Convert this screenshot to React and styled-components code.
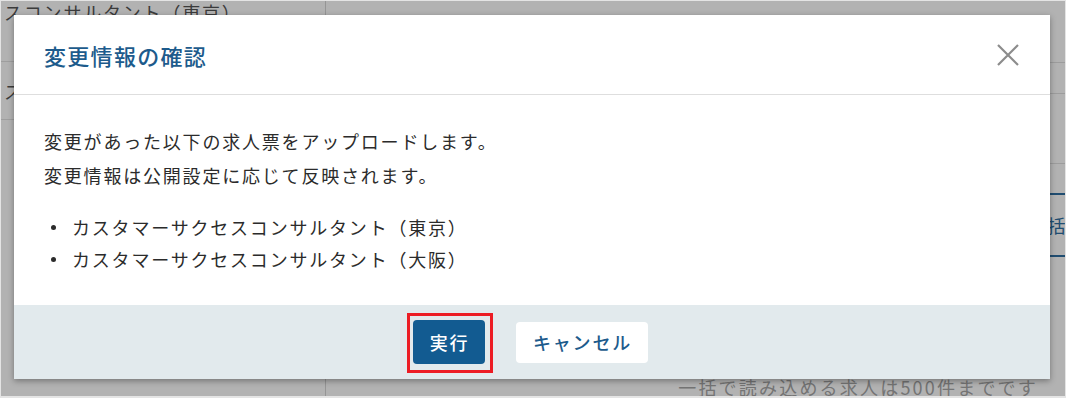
import React from "react";
import styled, { createGlobalStyle } from "styled-components";

const GlobalStyle = createGlobalStyle`
  html, body {
    margin: 0;
    padding: 0;
    background: #e4e4e4;
  }
  body {
    font-family: "Noto Sans CJK JP", "Noto Sans", sans-serif;
    color: #333;
  }
`;

const Frame = styled.div`
  width: 1066px;
  height: 398px;
  box-sizing: border-box;
  padding: 1px 1px 2px 1px;
  background: #e4e4e4;
`;

const Screen = styled.div`
  position: relative;
  width: 100%;
  height: 100%;
  overflow: hidden;
  background: #fff;
  display: flex;
`;

/* page behind the dialog */
const LeftPanel = styled.div`
  width: 324px;
  flex-shrink: 0;
  border-right: 1px solid #d6d6d6;
  display: flex;
  flex-direction: column;
`;

const JobRow = styled.div`
  height: ${(p) => p.$height}px;
  box-sizing: border-box;
  border-bottom: 1px solid #e2e2e2;
  padding-left: 3px;
  display: flex;
  align-items: ${(p) => (p.$top ? "flex-start" : "center")};
  font-size: 18px;
  letter-spacing: 1.8px;
  line-height: 22px;
  color: #555;
  white-space: nowrap;
`;

const RightPanel = styled.div`
  flex: 1;
  display: flex;
  flex-direction: column;
`;

const PanelBlock = styled.div`
  height: ${(p) => p.$height}px;
  box-sizing: border-box;
  border-bottom: 1px solid #e0e0e0;
`;

const BulkRow = styled.div`
  display: flex;
  justify-content: flex-end;
  margin-top: 29px;
  margin-right: -42px;
`;

const BulkButton = styled.div`
  height: 64px;
  box-sizing: border-box;
  border-top: 2px solid #2f6fa2;
  border-bottom: 2px solid #2f6fa2;
  padding: 0 0 0 20px;
  display: flex;
  align-items: center;
  font-size: 18px;
  letter-spacing: 1.8px;
  color: #2f6fa2;
  white-space: nowrap;
`;

const LimitNote = styled.div`
  margin-top: auto;
  margin-bottom: -3px;
  padding-right: 27px;
  text-align: right;
  font-size: 18px;
  letter-spacing: 2.2px;
  line-height: 24px;
  color: #a6a6a6;
  white-space: nowrap;
`;

/* dialog */
const Overlay = styled.div`
  position: absolute;
  inset: 0;
  background: rgba(0, 0, 0, 0.3);
  box-sizing: border-box;
  padding: 14px 15px 17px 13px;
  display: flex;
`;

const Modal = styled.div`
  flex: 1;
  background: #fff;
  display: flex;
  flex-direction: column;
  box-shadow: 0 2px 6px rgba(0, 0, 0, 0.35);
`;

const ModalHeader = styled.div`
  height: 80px;
  flex-shrink: 0;
  box-sizing: border-box;
  border-bottom: 1px solid #dedede;
  padding: 0 30px 0 30px;
  display: flex;
  align-items: center;
  justify-content: space-between;
`;

const Title = styled.h2`
  margin: 0;
  font-size: 22px;
  font-weight: 500;
  letter-spacing: 1.3px;
  color: #1d5b8c;
`;

const CloseButton = styled.button`
  width: 24px;
  height: 24px;
  padding: 0;
  border: none;
  background: none;
  cursor: pointer;
  display: flex;
  align-items: center;
  justify-content: center;
`;

const ModalBody = styled.div`
  flex: 1;
  padding: 29px 30px 0 30px;
  font-size: 18px;
  letter-spacing: 1.8px;
  color: #2b2b2b;
`;

const Paragraph = styled.p`
  margin: 0;
  line-height: 34px;
`;

const JobList = styled.ul`
  list-style: none;
  margin: 19px 0 0 0;
  padding: 0 0 0 7px;
`;

const JobItem = styled.li`
  display: flex;
  align-items: center;
  gap: 16px;
  line-height: 32px;

  &::before {
    content: "";
    width: 5px;
    height: 5px;
    border-radius: 50%;
    background: #2b2b2b;
    flex-shrink: 0;
  }
`;

const ModalFooter = styled.div`
  height: 74px;
  flex-shrink: 0;
  background: #e2eaed;
  display: flex;
  align-items: center;
  justify-content: center;
  gap: 31px;
  padding-right: 4px;
`;

const Highlight = styled.div`
  position: relative;
  display: flex;

  &::after {
    content: "";
    position: absolute;
    left: -6px;
    right: -8px;
    top: -7px;
    bottom: -9px;
    border: 3px solid #ec1c24;
    pointer-events: none;
  }
`;

const Button = styled.button`
  height: ${(p) => (p.$primary ? 44 : 41)}px;
  width: ${(p) => (p.$primary ? 72 : 132)}px;
  padding: 0 0 0 2px;
  border: none;
  border-radius: 4px;
  font-family: inherit;
  font-size: 18px;
  font-weight: 500;
  letter-spacing: 1.8px;
  background: ${(p) => (p.$primary ? "#125b91" : "#fff")};
  color: ${(p) => (p.$primary ? "#fff" : "#1d5b8c")};
  cursor: pointer;
`;

const jobs = [
  "カスタマーサクセスコンサルタント（東京）",
  "カスタマーサクセスコンサルタント（大阪）",
];

export default function App() {
  return (
    <>
      <GlobalStyle />
      <Frame>
        <Screen>
          <LeftPanel>
            <JobRow $height={61} $top>
              スコンサルタント（東京）
            </JobRow>
            <JobRow $height={58}>スコンサルタント（大阪）</JobRow>
          </LeftPanel>
          <RightPanel>
            <PanelBlock $height={62} />
            <PanelBlock $height={31} />
            <PanelBlock $height={70} />
            <BulkRow>
              <BulkButton>一括編集</BulkButton>
            </BulkRow>
            <LimitNote>一括で読み込める求人は500件までです</LimitNote>
          </RightPanel>

          <Overlay>
            <Modal>
              <ModalHeader>
                <Title>変更情報の確認</Title>
                <CloseButton aria-label="閉じる">
                  <svg width="24" height="24" viewBox="0 0 24 24">
                    <path
                      d="M2 2 L22 22 M22 2 L2 22"
                      stroke="#8c8c8c"
                      strokeWidth="2.2"
                      fill="none"
                    />
                  </svg>
                </CloseButton>
              </ModalHeader>
              <ModalBody>
                <Paragraph>
                  変更があった以下の求人票をアップロードします。
                  <br />
                  変更情報は公開設定に応じて反映されます。
                </Paragraph>
                <JobList>
                  {jobs.map((job) => (
                    <JobItem key={job}>{job}</JobItem>
                  ))}
                </JobList>
              </ModalBody>
              <ModalFooter>
                <Highlight>
                  <Button $primary>実行</Button>
                </Highlight>
                <Button>キャンセル</Button>
              </ModalFooter>
            </Modal>
          </Overlay>
        </Screen>
      </Frame>
    </>
  );
}
